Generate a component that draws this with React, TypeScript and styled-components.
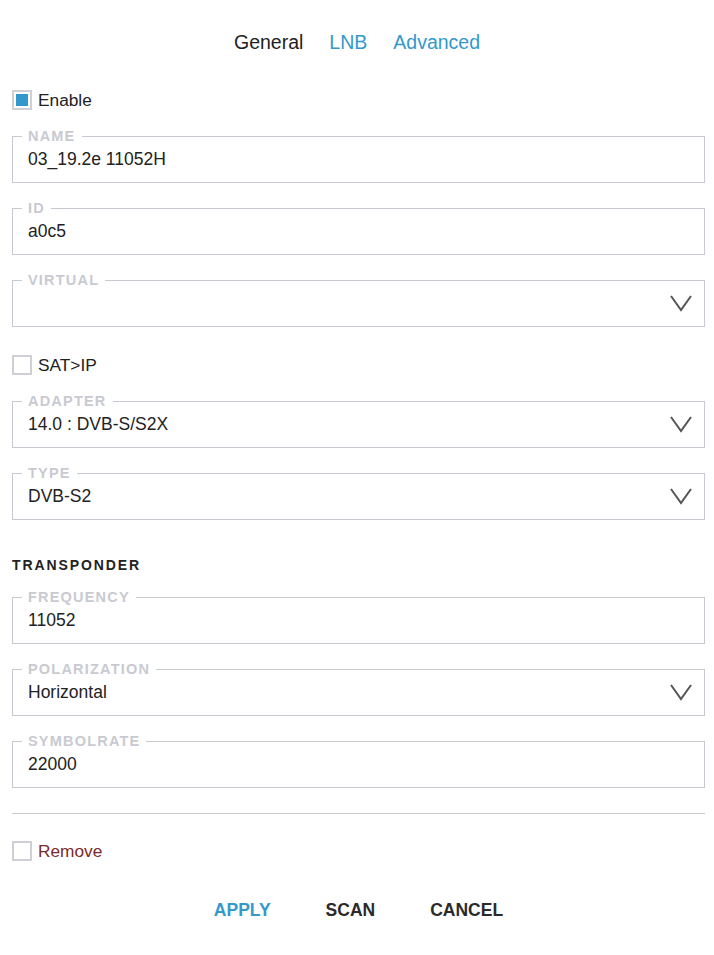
import React, { useState } from 'react';
import styled, { createGlobalStyle } from 'styled-components';

const GlobalStyle = createGlobalStyle`
  html, body {
    margin: 0;
    padding: 0;
    background: #ffffff;
  }
  body {
    font-family: 'Liberation Sans', Arial, sans-serif;
    color: #222;
  }
`;

const Page = styled.div`
  width: 714px;
  box-sizing: border-box;
  padding: 0 9px 0 12px;
`;

const Tabs = styled.nav`
  display: flex;
  justify-content: center;
  gap: 26px;
  padding-top: 31px;
  height: 22px;
  margin-left: -3px;
`;

const Tab = styled.span<{ $active?: boolean }>`
  font-size: 19.5px;
  line-height: 22px;
  color: ${p => (p.$active ? '#222' : '#3399cc')};
  cursor: pointer;
`;

const CheckRow = styled.label<{ $danger?: boolean }>`
  display: flex;
  align-items: center;
  gap: 6px;
  height: 20px;
  font-size: 17.3px;
  color: ${p => (p.$danger ? '#7a2b2b' : '#222')};
  cursor: pointer;
`;

const Box = styled.span<{ $checked?: boolean }>`
  width: 20px;
  height: 20px;
  box-sizing: border-box;
  border: 2px solid #cfd0d6;
  padding: 2px;
  display: flex;
  &::after {
    content: '';
    flex: 1;
    background: ${p => (p.$checked ? '#3399cc' : 'transparent')};
  }
`;

const Field = styled.fieldset`
  margin: 0;
  padding: 0 15px 8px;
  border: 1px solid #c8c9d0;
  min-width: 0;
`;

const Legend = styled.legend`
  margin-left: -6px;
  padding: 0 6px;
  font-size: 14.5px;
  line-height: 15px;
  font-weight: bold;
  letter-spacing: 1.2px;
  color: #c9cad1;
`;

const Value = styled.div`
  height: 30px;
  display: flex;
  align-items: center;
  justify-content: space-between;
  font-size: 17.5px;
  color: #222;
`;

const Chevron = styled.svg`
  width: 24px;
  height: 18px;
  margin-right: -4px;
`;

const Heading = styled.h3`
  margin: 0;
  font-size: 14px;
  font-weight: bold;
  letter-spacing: 1.9px;
  color: #222;
`;

const Divider = styled.hr`
  margin: 0;
  border: 0;
  border-top: 1px solid #c8c9d0;
`;

const Actions = styled.div`
  display: flex;
  justify-content: center;
  gap: 55px;
  margin-left: 0;
`;

const Action = styled.button<{ $primary?: boolean }>`
  border: 0;
  background: none;
  padding: 0;
  font-family: 'Liberation Sans', Arial, sans-serif;
  font-size: 17.5px;
  font-weight: bold;
  line-height: 20px;
  color: ${p => (p.$primary ? '#3399cc' : '#2a2a2a')};
  cursor: pointer;
`;

const Spacer = styled.div<{ $h: number }>`
  height: ${p => p.$h}px;
`;

const Down = () => (
  <Chevron viewBox="0 0 24 18">
    <path d="M2 2 L12 16 L22 2" fill="none" stroke="#555" strokeWidth="2" />
  </Chevron>
);

const TextField: React.FC<{ label: string; value: string; select?: boolean }> = ({ label, value, select }) => (
  <Field>
    <Legend>{label}</Legend>
    <Value>
      <span>{value}</span>
      {select && <Down />}
    </Value>
  </Field>
);

const Check: React.FC<{ label: string; initial?: boolean; danger?: boolean }> = ({ label, initial, danger }) => {
  const [on, setOn] = useState(!!initial);
  return (
    <CheckRow $danger={danger} onClick={() => setOn(!on)}>
      <Box $checked={on} />
      {label}
    </CheckRow>
  );
};

export default function App() {
  return (
    <Page>
      <GlobalStyle />
      <Tabs>
        <Tab $active>General</Tab>
        <Tab>LNB</Tab>
        <Tab>Advanced</Tab>
      </Tabs>
      <Spacer $h={37} />
      <Check label="Enable" initial />
      <Spacer $h={19} />
      <TextField label="NAME" value="03_19.2e 11052H" />
      <Spacer $h={18} />
      <TextField label="ID" value="a0c5" />
      <Spacer $h={18} />
      <TextField label="VIRTUAL" value="" select />
      <Spacer $h={28} />
      <Check label="SAT>IP" />
      <Spacer $h={19} />
      <TextField label="ADAPTER" value="14.0 : DVB-S/S2X" select />
      <Spacer $h={18} />
      <TextField label="TYPE" value="DVB-S2" select />
      <Spacer $h={37} />
      <Heading>TRANSPONDER</Heading>
      <Spacer $h={17} />
      <TextField label="FREQUENCY" value="11052" />
      <Spacer $h={18} />
      <TextField label="POLARIZATION" value="Horizontal" select />
      <Spacer $h={18} />
      <TextField label="SYMBOLRATE" value="22000" />
      <Spacer $h={25} />
      <Divider />
      <Spacer $h={27} />
      <Check label="Remove" danger />
      <Spacer $h={39} />
      <Actions>
        <Action $primary>APPLY</Action>
        <Action>SCAN</Action>
        <Action>CANCEL</Action>
      </Actions>
    </Page>
  );
}
